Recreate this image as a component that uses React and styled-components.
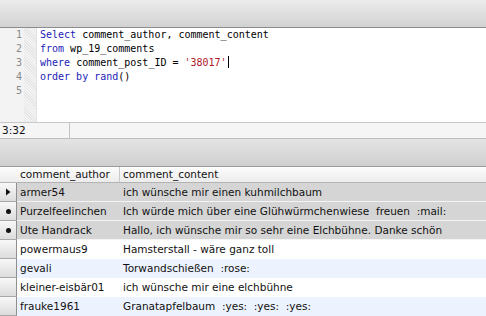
import styled, { createGlobalStyle } from "styled-components";

const GlobalStyle = createGlobalStyle`
  html, body {
    margin: 0;
    padding: 0;
    background: #ffffff;
    overflow: hidden;
  }
`;

const Window = styled.div`
  width: 486px;
  height: 316px;
  display: flex;
  flex-direction: column;
  overflow: hidden;
  font-family: "DejaVu Sans", "Liberation Sans", sans-serif;
`;

const Toolbar = styled.div`
  height: 27px;
  flex-shrink: 0;
  background: linear-gradient(#ececec, #d2d2d2);
  border-bottom: 1px solid #8c8c8c;
`;

const Editor = styled.div`
  height: 94px;
  flex-shrink: 0;
  display: flex;
  background: #ffffff;
`;

const Gutter = styled.div`
  width: 22px;
  background: #f3f3f3;
  display: flex;
  flex-direction: column;
  align-items: flex-end;
  padding-right: 2px;
  font-family: "DejaVu Sans Mono", "Liberation Mono", monospace;
  font-size: 10px;
  line-height: 14px;
  color: #8a8a8a;
`;

const Hatch = styled.div`
  width: 12px;
  background: repeating-linear-gradient(
    45deg,
    #f4f4f4 0 1px,
    #e6e6e6 1px 2px
  );
  border-right: 1px solid #e2e2e2;
`;

const Code = styled.pre`
  margin: 0;
  padding-left: 3px;
  font-family: "DejaVu Sans Mono", "Liberation Mono", monospace;
  font-size: 10px;
  line-height: 14px;
  color: #000000;
`;

const Keyword = styled.span`
  color: #1c1cb8;
`;

const Str = styled.span`
  color: #b0182a;
`;

const Caret = styled.span`
  display: inline-block;
  width: 1px;
  height: 12px;
  margin-left: 1px;
  vertical-align: -2px;
  background: #000000;
`;

const StatusBar = styled.div`
  height: 15px;
  flex-shrink: 0;
  display: flex;
  background: #f5f5f5;
  border-top: 1px solid #c8c8c8;
  font-size: 10.5px;
  line-height: 15px;
  color: #111111;
`;

const StatusCell = styled.div`
  width: 67px;
  padding-left: 2px;
  border-right: 1px solid #c4c4c4;
`;

const Splitter = styled.div`
  height: 27px;
  flex-shrink: 0;
  background: linear-gradient(#e4e4e4, #cfcfcf);
  border-top: 1px solid #bdbdbd;
  border-bottom: 1px solid #9a9a9a;
`;

const Grid = styled.div`
  display: grid;
  grid-template-columns: 17px 102px 1fr;
  grid-template-rows: 16px;
  grid-auto-rows: 19px;
  font-size: 10.5px;
  color: #111111;
`;

const HeadCell = styled.div`
  line-height: 15px;
  padding-left: ${({ $pad }) => $pad}px;
  background: linear-gradient(#fdfdfd, #ececec);
  border-bottom: 1px solid #b4b4b4;
  border-left: ${({ $divider }) => ($divider ? "1px solid #c8c8c8" : "none")};
  white-space: nowrap;
`;

const RowHead = styled.div`
  display: flex;
  align-items: center;
  justify-content: center;
  background: linear-gradient(#f8f8f8, #dcdcdc);
  border-right: 1px solid #8f8f8f;
  border-bottom: 1px solid #a8a8a8;
  box-sizing: border-box;
`;

const Cell = styled.div`
  line-height: 19px;
  padding-left: ${({ $pad }) => $pad}px;
  white-space: pre;
  overflow: hidden;
  background: ${({ $bg }) => $bg};
  border-bottom: 1px solid ${({ $line }) => $line};
  box-sizing: border-box;
`;

const Arrow = () => (
  <svg width="6" height="8" viewBox="0 0 6 8">
    <path d="M1 0.5 L5.5 4 L1 7.5 Z" fill="#111" />
  </svg>
);

const Dot = styled.span`
  width: 5px;
  height: 5px;
  border-radius: 50%;
  background: #111111;
`;

const rows = [
  { author: "armer54", content: "ich wünsche mir einen kuhmilchbaum", mark: "arrow", sel: true },
  { author: "Purzelfeelinchen", content: "Ich würde mich über eine Glühwürmchenwiese  freuen  :mail:", mark: "dot", sel: true },
  { author: "Ute Handrack", content: "Hallo, ich wünsche mir so sehr eine Elchbühne. Danke schön", mark: "dot", sel: true },
  { author: "powermaus9", content: "Hamsterstall - wäre ganz toll" },
  { author: "gevali", content: "Torwandschießen  :rose:" },
  { author: "kleiner-eisbär01", content: "ich wünsche mir eine elchbühne" },
  { author: "frauke1961", content: "Granatapfelbaum  :yes:  :yes:  :yes:" },
];

const lines = [
  <>
    <Keyword>Select</Keyword> comment_author, comment_content
  </>,
  <>
    <Keyword>from</Keyword> wp_19_comments
  </>,
  <>
    <Keyword>where</Keyword> comment_post_ID = <Str>'38017'</Str>
    <Caret />
  </>,
  <>
    <Keyword>order by rand</Keyword>()
  </>,
  <> </>,
];

export default function App() {
  return (
    <Window>
      <GlobalStyle />
      <Toolbar />
      <Editor>
        <Gutter>
          {lines.map((_, i) => (
            <div key={i}>{i + 1}</div>
          ))}
        </Gutter>
        <Hatch />
        <Code>
          {lines.map((l, i) => (
            <div key={i}>{l}</div>
          ))}
        </Code>
      </Editor>
      <StatusBar>
        <StatusCell>3:32</StatusCell>
      </StatusBar>
      <Splitter />
      <Grid>
        <HeadCell $pad={0} />
        <HeadCell $pad={3}>comment_author</HeadCell>
        <HeadCell $pad={3} $divider>
          comment_content
        </HeadCell>
        {rows.map((r, i) => {
          const bg = r.sel ? "#d5d5d5" : i % 2 === 1 ? "#ffffff" : "#edf3fe";
          const line = r.sel ? "#f4f4f4" : bg;
          return [
            <RowHead key={r.author + "-h"}>
              {r.mark === "arrow" && <Arrow />}
              {r.mark === "dot" && <Dot />}
            </RowHead>,
            <Cell key={r.author + "-a"} $pad={3} $bg={bg} $line={line}>
              {r.author}
            </Cell>,
            <Cell key={r.author + "-c"} $pad={4} $bg={bg} $line={line}>
              {r.content}
            </Cell>,
          ];
        })}
      </Grid>
    </Window>
  );
}
